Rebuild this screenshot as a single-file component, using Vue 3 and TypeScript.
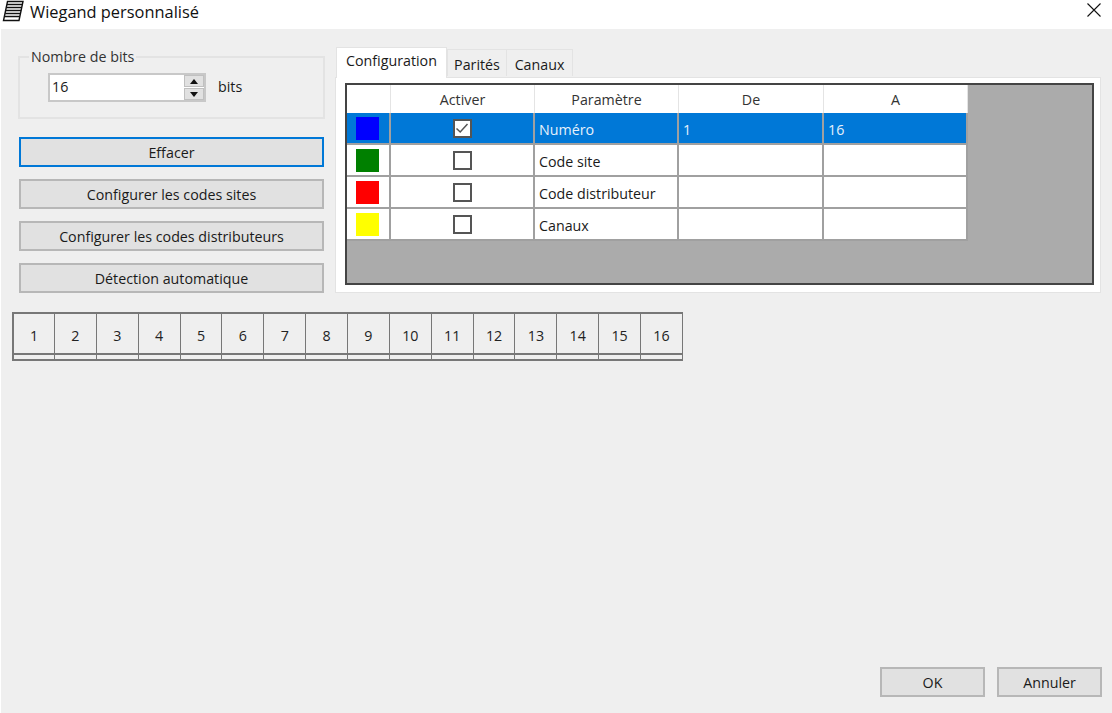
<script setup lang="ts">
const rows = [
  { color: '#0000ff', on: true, name: 'Numéro', from: '1', to: '16' },
  { color: '#008000', on: false, name: 'Code site', from: '', to: '' },
  { color: '#ff0000', on: false, name: 'Code distributeur', from: '', to: '' },
  { color: '#ffff00', on: false, name: 'Canaux', from: '', to: '' },
]
const actions = ['Configurer les codes sites', 'Configurer les codes distributeurs', 'Détection automatique']
const bits = Array.from({ length: 16 }, (_, i) => i + 1)
</script>

<template>
  <div class="window">
    <header class="titlebar">
      <svg class="app-icon" width="24" height="22" viewBox="0 0 24 22" fill="none" stroke="#111" stroke-width="1.4">
        <path d="M6.5 1.5H22L18 20.5H2.5Z" fill="#fff" />
        <path d="M6 4.5H21.4M5.4 7.5H20.8M4.8 10.5H20.2M4.2 13.5H19.5M3.6 16.5H18.9" />
      </svg>
      <span class="title">Wiegand personnalisé</span>
      <svg class="close" width="14" height="14" viewBox="0 0 14 14" stroke="#111" stroke-width="1.1">
        <path d="M0.5 0.5L13.5 13.5M13.5 0.5L0.5 13.5" />
      </svg>
    </header>

    <main class="content">
      <section class="top">
        <div class="left">
          <fieldset class="group">
            <legend>Nombre de bits</legend>
            <div class="group-row">
              <div class="spin">
                <span class="spin-value">16</span>
                <div class="spin-btns">
                  <span class="spin-btn"><i class="up"></i></span>
                  <span class="spin-btn"><i class="down"></i></span>
                </div>
              </div>
              <span class="unit">bits</span>
            </div>
          </fieldset>
          <button class="btn focused">Effacer</button>
          <button v-for="a in actions" :key="a" class="btn">{{ a }}</button>
        </div>

        <div class="tabs">
          <div class="tab-strip">
            <span class="tab active">Configuration</span>
            <span class="tab w-parites">Parités</span>
            <span class="tab w-canaux">Canaux</span>
          </div>
          <div class="tab-panel">
            <div class="grid-view">
              <div class="grid">
                <div class="head"></div>
                <div class="head">Activer</div>
                <div class="head">Paramètre</div>
                <div class="head">De</div>
                <div class="head">A</div>
                <template v-for="r in rows" :key="r.name">
                  <div class="cell swatch-cell" :class="{ sel: r.on }">
                    <span class="swatch" :style="{ background: r.color }"></span>
                  </div>
                  <div class="cell check-cell" :class="{ sel: r.on }">
                    <span class="check">
                      <svg v-if="r.on" width="14" height="14" viewBox="0 0 14 14" fill="none" stroke="#555" stroke-width="1.5">
                        <path d="M1.5 7.5L5.2 11L12.5 3" />
                      </svg>
                    </span>
                  </div>
                  <div class="cell text" :class="{ sel: r.on }">{{ r.name }}</div>
                  <div class="cell text" :class="{ sel: r.on }">{{ r.from }}</div>
                  <div class="cell text" :class="{ sel: r.on }">{{ r.to }}</div>
                </template>
              </div>
            </div>
          </div>
        </div>
      </section>

      <section class="bits">
        <div v-for="b in bits" :key="b" class="bit">
          <span class="bit-num">{{ b }}</span>
          <span class="bit-foot"></span>
        </div>
      </section>

      <footer class="footer">
        <button class="btn small">OK</button>
        <button class="btn small">Annuler</button>
      </footer>
    </main>
  </div>
</template>

<style>
html, body { margin: 0; background: #fff; }
</style>

<style scoped>
.window {
  width: 1112px;
  height: 713px;
  display: flex;
  flex-direction: column;
  overflow: hidden;
  background: #fff;
  font-family: "Open Sans", "Noto Sans", sans-serif;
  font-size: 14.25px;
  color: #1a1a1a;
}
.titlebar {
  height: 29px;
  flex: none;
  display: flex;
  align-items: flex-start;
  padding: 0 18px 0 1px;
  box-sizing: border-box;
}
.app-icon { flex: none; margin-right: 5px; }
.title { font-size: 16.4px; line-height: 23px; color: #111; }
.close { margin-left: auto; margin-top: 3px; margin-right: -7px; }
.content {
  flex: 1;
  margin-left: 1px;
  background: #efefef;
  display: flex;
  flex-direction: column;
  padding: 18px 10px 16px 11px;
  min-height: 0;
}
.top { display: flex; gap: 10px; padding-left: 6px; }
.left {
  width: 307px;
  flex: none;
  display: flex;
  flex-direction: column;
  padding-top: 2px;
}
.group {
  margin: 0 0 18px;
  padding: 0 0 0 28px;
  height: 70px;
  box-sizing: border-box;
  border: 2px solid #e3e3e3;
}
.group legend { padding: 0 2px; margin-left: -19px; line-height: 16px; height: 16px; color: #333; }
.group-row { display: flex; align-items: center; gap: 12px; margin-top: 8px; }
.unit { margin-top: -2px; }
.spin {
  width: 158px;
  height: 29px;
  box-sizing: border-box;
  background: #fff;
  border: 2px solid #c8c8c8;
  display: flex;
  align-items: center;
  justify-content: space-between;
}
.spin-value { padding-left: 2px; margin-top: -2px; }
.spin-btns {
  width: 20px;
  align-self: stretch;
  display: flex;
  flex-direction: column;
  gap: 1px;
  background: #fff;
}
.spin-btn {
  flex: 1;
  background: #e1e1e1;
  border: 1px solid #c0c0c0;
  display: flex;
  align-items: center;
  justify-content: center;
}
.up, .down { width: 0; height: 0; border-left: 4.5px solid transparent; border-right: 4.5px solid transparent; }
.up { border-bottom: 5px solid #111; }
.down { border-top: 5px solid #111; }
.btn {
  width: 305px;
  height: 30px;
  margin: 0 0 12px 1px;
  padding: 0;
  box-sizing: border-box;
  background: #e1e1e1;
  border: 2px solid #b7b7b7;
  font: inherit;
  color: #1a1a1a;
}
.btn:last-child { margin-bottom: 0; }
.btn.focused { border-color: #0078d7; }
.tabs { width: 766px; flex: none; display: flex; flex-direction: column; }
.tab-strip { display: flex; height: 30px; align-items: flex-end; padding-left: 1px; }
.tab {
  height: 27px;
  box-sizing: border-box;
  border: 1px solid #e3e3e3;
  border-bottom: none;
  padding-top: 5px;
  background: #efefef;
  margin-bottom: 1px;
  text-align: center;
}
.w-parites { width: 60px; }
.w-canaux { width: 66px; border-left: none; }
.tab.active {
  width: 111px;
  height: 31px;
  background: #fff;
  padding-top: 3px;
  margin-bottom: -1px;
  position: relative;
  z-index: 1;
}
.tab-panel {
  height: 216px;
  box-sizing: border-box;
  background: #fff;
  border: 1px solid #e3e3e3;
  padding: 5px 6px 7px 9px;
}
.grid-view {
  height: 100%;
  box-sizing: border-box;
  background: #ababab;
  border: 2px solid #444;
}
.grid {
  display: grid;
  grid-template-columns: 44px 144px 144px 145px 144px;
  grid-template-rows: 28px repeat(4, 32px);
  width: 621px;
}
.head {
  background: #fff;
  border-right: 1px solid #e4e4e4;
  display: flex;
  align-items: center;
  justify-content: center;
  color: #333;
  box-sizing: border-box;
}
.cell {
  background: #fff;
  border-right: 2px solid #a0a0a0;
  border-bottom: 2px solid #a0a0a0;
  box-sizing: border-box;
  display: flex;
  align-items: center;
}
.text { padding: 2px 0 0 4px; }
.cell.sel { background: #0078d7; color: #e6f1fb; }
.swatch-cell, .check-cell { justify-content: center; }
.swatch-cell { padding-right: 1px; }
.swatch { width: 23px; height: 23px; }
.check {
  width: 19px;
  height: 19px;
  box-sizing: border-box;
  border: 2px solid #555;
  background: #fff;
  display: flex;
  align-items: center;
  justify-content: center;
}
.bits { display: flex; margin-top: 19px; }
.bit {
  width: 41.87px;
  height: 49px;
  box-sizing: border-box;
  border: 1px solid #777;
  border-left-width: 0;
  border-top-width: 2px;
  border-bottom-width: 2px;
  display: flex;
  flex-direction: column;
}
.bit:first-child { border-left-width: 2px; width: 43px; }
.bit-num {
  height: 41px;
  box-sizing: border-box;
  padding-top: 3px;
  display: flex;
  align-items: center;
  justify-content: center;
  border-bottom: 2px solid #777;
  color: #222;
}
.bit-foot { flex: 1; }
.footer {
  margin-top: auto;
  display: flex;
  justify-content: flex-end;
  gap: 12px;
}
.btn.small { width: 105px; height: 30px; margin: 0; }
</style>
